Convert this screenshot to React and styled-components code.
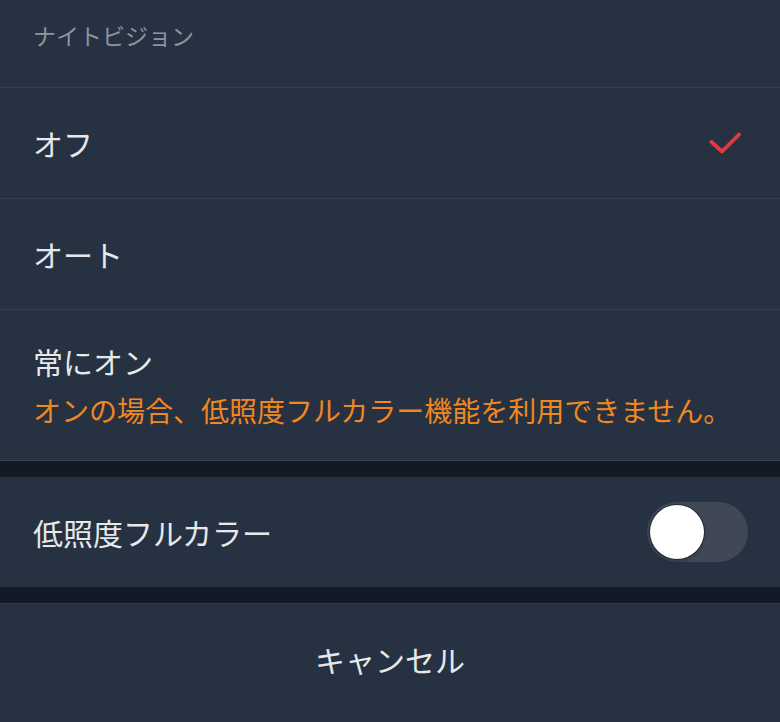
import React, { useState } from "react";
import styled, { createGlobalStyle } from "styled-components";

const Global = createGlobalStyle`
  html, body { margin: 0; padding: 0; background: #263142; }
  body {
    font-family: "Noto Sans CJK JP", "Noto Sans", sans-serif;
    -webkit-font-smoothing: antialiased;
  }
`;

const Sheet = styled.div`
  width: 780px;
  min-height: 722px;
  background: #131a25;
  display: flex;
  flex-direction: column;
`;

const Group = styled.div`
  background: #263142;
  display: flex;
  flex-direction: column;
`;

const Spacer = styled.div`
  height: 16px;
  background: #131a25;
`;

const Header = styled.div`
  height: 88px;
  box-sizing: border-box;
  padding: 20px 33px 0;
  border-bottom: 1px solid #36404f;
  color: #8b949f;
  font-size: 23px;
  line-height: 30px;
`;

const Row = styled.div`
  height: ${(p) => p.$h || 110}px;
  box-sizing: content-box;
  display: flex;
  align-items: center;
  justify-content: space-between;
  padding: 0 32px 0 33px;
  border-bottom: ${(p) => (p.$last ? "none" : "1px solid #36404f")};
`;

const TextCol = styled.div`
  display: flex;
  flex-direction: column;
  gap: 8px;
`;

const Label = styled.div`
  color: #e6e8eb;
  font-size: 30px;
  line-height: 40px;
`;

const Note = styled.div`
  color: #f0871f;
  font-size: 28px;
  line-height: 40px;
  margin-top: ${(p) => p.$mt || 0}px;
`;

const Check = styled.svg`
  width: 32px;
  height: 24px;
  margin-right: 7px;
`;

const Track = styled.button`
  width: 101px;
  height: 60px;
  border-radius: 30px;
  border: none;
  padding: 0;
  background: #404856;
  position: relative;
  cursor: pointer;
  flex-shrink: 0;
`;

const Knob = styled.span`
  position: absolute;
  top: 3px;
  left: ${(p) => (p.$on ? "43px" : "3px")};
  width: 54px;
  height: 54px;
  border-radius: 50%;
  background: #ffffff;
  box-shadow: 0 0 0 1px rgba(20, 26, 37, 0.6), 0 2px 4px rgba(0, 0, 0, 0.25);
`;

const Cancel = styled.div`
  height: 110px;
  display: flex;
  align-items: center;
  justify-content: center;
  color: #e6e8eb;
  font-size: 30px;
  border-top: 1px solid #2d3848;
`;

const Bottom = styled(Group)`
  flex: 1;
`;

function CheckMark() {
  return (
    <Check viewBox="0 0 32 24">
      <path
        d="M2.5 11 L13 20.5 L30 3.5"
        fill="none"
        stroke="#e23a40"
        strokeWidth="3.8"
        strokeLinecap="round"
        strokeLinejoin="round"
      />
    </Check>
  );
}

export default function App() {
  const [mode, setMode] = useState("off");
  const [lowLight, setLowLight] = useState(false);
  const options = [
    { key: "off", label: "オフ" },
    { key: "auto", label: "オート" },
  ];
  return (
    <>
      <Global />
      <Sheet>
        <Group>
          <Header>ナイトビジョン</Header>
          {options.map((o) => (
            <Row key={o.key} onClick={() => setMode(o.key)}>
              <Label>{o.label}</Label>
              {mode === o.key && <CheckMark />}
            </Row>
          ))}
          <Row $h={150} onClick={() => setMode("on")}>
            <TextCol>
              <Label>常にオン</Label>
              <Note $mt={1}>オンの場合、低照度フルカラー機能を利用できません。</Note>
            </TextCol>
            {mode === "on" && <CheckMark />}
          </Row>
        </Group>
        <Spacer />
        <Group>
          <Row $last>
            <Label>低照度フルカラー</Label>
            <Track onClick={() => setLowLight(!lowLight)} aria-pressed={lowLight}>
              <Knob $on={lowLight} />
            </Track>
          </Row>
        </Group>
        <Spacer />
        <Bottom>
          <Cancel>キャンセル</Cancel>
        </Bottom>
      </Sheet>
    </>
  );
}
